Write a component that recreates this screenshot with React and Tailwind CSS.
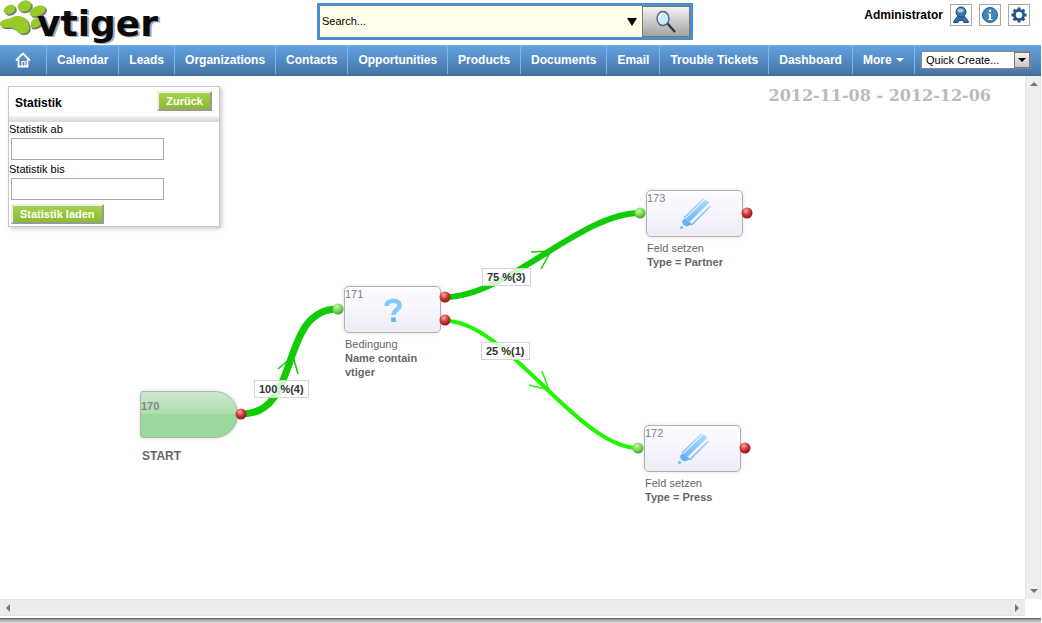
import React from "react";

const modules = [
  "Calendar", "Leads", "Organizations", "Contacts", "Opportunities", "Products",
  "Documents", "Email", "Trouble Tickets", "Dashboard",
];

function Paw() {
  return (
    <>
      <ellipse cx="9.500" cy="9.500" rx="6" ry="4.500" transform="rotate(-25 9.500 9.500)" />
      <ellipse cx="24.500" cy="6" rx="7" ry="5.500" transform="rotate(-25 24.500 6)" />
      <ellipse cx="37.500" cy="11" rx="8.500" ry="4.800" transform="rotate(-22 37.500 11)" />
      <path d="M0 24C0 19 7 20 12 17.500C18 14 26 17 27.500 21C28 24 30 26 29 29C28 34 21 35 18 32C15 29 12 27 8 27.500C4 28 0 27 0 24Z" />
      <path d="M31 24C31 19 37 17 42 18C46 19 46 22 43 24C39 25 37 28 33 28C30 28 30 27 31 24Z" />
    </>
  );
}

function Logo() {
  return (
    <svg viewBox="0 0 164 45" className="h-[45px] w-[164px]" role="img" aria-label="vtiger">
      <g fill="#777" transform="translate(1.500 1.500)"><Paw /></g>
      <g fill="#97cb2c"><Paw /></g>
      <g fontSize="36" fontWeight="700" fontFamily="DejaVu Sans, sans-serif">
        <text x="39" y="37" fill="#aaa">vtiger</text>
        <text x="37" y="36" fill="#0a0a0a">vtiger</text>
      </g>
    </svg>
  );
}

function IconButton({ label, children }) {
  return (
    <button type="button" aria-label={label} className="flex size-[22px] items-center justify-center border border-[#a9a9a9] bg-white">
      <svg viewBox="0 0 20 20" className="size-5">{children}</svg>
    </button>
  );
}

function Header() {
  return (
    <header className="grid h-[45px] grid-cols-[317px_minmax(0,376px)_1fr] items-start">
      <Logo />
      <form className="mt-[3px] flex h-[37px] border-[3px] border-[#4b8ccb] bg-[#ffffec]" onSubmit={(e) => e.preventDefault()}>
        <input aria-label="Search" defaultValue="Search..." className="min-w-0 flex-1 bg-transparent px-0.5 text-[11px] text-black outline-none" />
        <button type="button" aria-label="Search options" className="flex w-5 items-center justify-center">
          <svg viewBox="0 0 10 8" className="h-2 w-2.5"><path d="M0 0H10L5 8Z" /></svg>
        </button>
        <button type="submit" aria-label="Start search" className="flex w-[48px] items-center justify-center border border-[#777] bg-linear-to-b from-[#f4f4f4] to-[#a3a3a3]">
          <svg viewBox="0 0 22 24" className="h-6 w-[22px]">
            <path d="M12 13L20 22" stroke="#333" strokeWidth="2.200" />
            <ellipse cx="8" cy="8.500" rx="6" ry="7" fill="#c9ecfa" stroke="#4d6677" strokeWidth="1.400" />
            <path d="M4.500 8Q5 4 8 3.500" stroke="#fff" strokeWidth="1.500" fill="none" />
          </svg>
        </button>
      </form>
      <div className="flex items-center gap-[7px] pt-1 pr-[11px] justify-self-end">
        <span className="text-[12px] font-bold text-black">Administrator</span>
        <IconButton label="User">
          <path d="M2.500 17.500C3 14 6 13 7.500 10H12.500C14 13 17 14 17.500 17.500H13L12 15.500H8L7 17.500Z" fill="#3470a3" stroke="#1d4c7c" />
          <circle cx="10" cy="7" r="5" fill="#3b78aa" stroke="#1d4c7c" />
          <ellipse cx="9.500" cy="5.500" rx="3" ry="2" fill="#a5c8e0" />
        </IconButton>
        <IconButton label="Info">
          <circle cx="10" cy="10" r="7.500" fill="#4288b8" stroke="#245f91" />
          <path d="M8 8.500H11V14H12.500V15H8V14H9V9.500H8ZM9 4.800H11.200V7H9Z" fill="#fff" />
        </IconButton>
        <IconButton label="Settings">
          <g fill="#1c568c">
            <path d="M8.500 2.500h3v15h-3zM2.500 8.500h15v3h-15z" />
            <path d="M8.500 2.500h3v15h-3zM2.500 8.500h15v3h-15z" transform="rotate(45 10 10)" />
            <circle cx="10" cy="10" r="6" />
          </g>
          <circle cx="10" cy="10" r="3.300" fill="#fff" />
        </IconButton>
      </div>
    </header>
  );
}

function Nav() {
  const item = "flex items-center border-r border-[#7fb6e8] px-[10px] text-[12px] font-bold text-white";
  return (
    <nav className="flex h-[31px] border-t border-b-2 border-t-[#79b2ea] border-b-[#416c99] bg-linear-to-b from-[#62a1e1] to-[#4776a8] pr-[10px]">
      <a href="#home" aria-label="Home" className="flex w-[47px] items-center justify-center border-r border-[#7fb6e8]">
        <svg viewBox="0 0 16 16" className="size-4">
          <path d="M1 8.500L8 1.500L15 8.500M3.500 7.500V14.500H12.500V7.500" fill="none" stroke="#fff" strokeWidth="1.800" />
          <path d="M7 14V9.500H10V14" fill="none" stroke="#fff" strokeWidth="1.200" />
        </svg>
      </a>
      {modules.map((m) => <a key={m} href={"#" + m} className={item}>{m}</a>)}
      <button type="button" className={item + " gap-1"}>
        More
        <svg viewBox="0 0 8 4" className="h-1 w-2"><path d="M0 0H8L4 4Z" fill="#fff" /></svg>
      </button>
      <div className="relative ml-auto flex items-center">
        <select aria-label="Quick Create" className="h-[18px] w-[110px] appearance-none border border-[#888] bg-white pl-1 text-[11px] text-black">
          <option>Quick Create...</option>
        </select>
        <span className="pointer-events-none absolute right-px flex h-4 w-4 items-center justify-center border border-[#777] bg-linear-to-b from-[#f2f2f2] to-[#c9c9c9]">
          <svg viewBox="0 0 8 4" className="h-1 w-2"><path d="M0 0H8L4 4Z" /></svg>
        </span>
      </div>
    </nav>
  );
}

const greenButton = "h-5 border-2 border-t-[#eee] border-l-[#eee] border-r-[#999] border-b-[#999] bg-linear-to-b from-[#a6d246] to-[#8cbb30] px-[7px] text-[11px] leading-4 font-bold text-white";

function StatsPanel() {
  return (
    <section className="absolute top-[10px] left-2 w-[212px] border border-[#c8c8c8] bg-white pb-[2px] text-[11px] text-black shadow-[2px_2px_4px_#ccc]">
      <div className="flex h-[28px] items-center justify-between pr-[7px] pl-[6px]">
        <h2 className="pt-1 text-[12px] font-bold">Statistik</h2>
        <button type="button" className={greenButton}>Zurück</button>
      </div>
      <div className="mt-px h-[6px] bg-linear-to-b from-[#f3f4f0] to-[#d5d7d1]" />
      <form onSubmit={(e) => e.preventDefault()}>
        <label htmlFor="from" className="block h-4 leading-[14px]">Statistik ab</label>
        <input id="from" className="ml-[2px] block h-[22px] w-[153px] border border-[#aaa] px-1" />
        <label htmlFor="to" className="mt-[2px] block h-4 leading-[14px]">Statistik bis</label>
        <input id="to" className="ml-[2px] block h-[22px] w-[153px] border border-[#aaa] px-1" />
        <button type="button" className={greenButton + " mt-1 ml-[2px] block"}>Statistik laden</button>
      </form>
    </section>
  );
}

function Pencil() {
  return (
    <svg viewBox="0 0 32 32" className="size-8">
      <defs>
        <linearGradient id="pencil" gradientUnits="userSpaceOnUse" x1="0" y1="2" x2="0" y2="28">
          <stop offset="0" stopColor="#a4dcff" /><stop offset="1" stopColor="#68b0fc" />
        </linearGradient>
      </defs>
      <g fill="none" stroke="url(#pencil)">
        <path d="M5 20L24.500 1" strokeWidth="1.500" />
        <path d="M8.500 22.500L28.500 3" strokeWidth="5" />
        <path d="M12.500 27L31.500 8" strokeWidth="1.500" />
      </g>
      <path d="M4 21.500L7 20.500L9.500 24L12 24.500L12.500 26.500L8 28.500L4.500 27L3 24ZM2 27.500L5 30L1 31Z" fill="#68b0fc" />
    </svg>
  );
}

function Question() {
  return (
    <svg viewBox="0 0 20 24" className="h-6 w-5">
      <path d="M3.500 8C3.500 1.200 16.500 1 16.500 7.500C16.500 12 10.500 11.500 10.500 17" fill="none" stroke="#86c9ff" strokeWidth="4.500" />
      <path d="M8.200 19.500H12.800V24H8.200Z" fill="#68b0fc" />
    </svg>
  );
}

const nodes = [
  { id: 171, place: "left-[344px] top-[210px]", kind: "Bedingung", text: "Name contain vtiger", Icon: Question },
  { id: 173, place: "left-[646px] top-[114px]", kind: "Feld setzen", text: "Type = Partner", Icon: Pencil },
  { id: 172, place: "left-[644px] top-[349px]", kind: "Feld setzen", text: "Type = Press", Icon: Pencil },
];

const edgeLabels = [
  { place: "left-[254px] top-[304px]", text: "100 %(4)" },
  { place: "left-[482px] top-[192px]", text: "75 %(3)" },
  { place: "left-[481px] top-[266px]", text: "25 %(1)" },
];

const inputs = [[338, 233], [640, 137], [638, 372]];
const outputs = [[241, 338], [445, 221], [445, 244], [747, 137], [745, 372]];

function Edges() {
  return (
    <svg className="absolute top-0 left-0 h-[440px] w-[800px]" viewBox="0 0 800 440" fill="none">
      <g stroke="#10cb06">
        <path d="M242 338C302 338 278 233 338 233" strokeWidth="7" />
        <path d="M278 293L293 280L298 298" strokeWidth="1.500" />
        <path d="M446 221C506 221 580 137 640 137" strokeWidth="6" />
        <path d="M531 176L551 175L541 193" strokeWidth="1.500" />
      </g>
      <g stroke="#22f500">
        <path d="M446 245C506 245 578 372 638 372" strokeWidth="4" />
        <path d="M529 309L549 314L542 295" strokeWidth="1.500" />
      </g>
    </svg>
  );
}

function Endpoints() {
  return (
    <svg className="pointer-events-none absolute top-0 left-0 h-[440px] w-[800px]" viewBox="0 0 800 440">
      <defs>
        <radialGradient id="in" cx="0.4" cy="0.3" r="0.7">
          <stop offset="0" stopColor="#c9f5ae" /><stop offset="0.6" stopColor="#7ad552" /><stop offset="1" stopColor="#4a9a2c" />
        </radialGradient>
        <radialGradient id="out" cx="0.4" cy="0.3" r="0.7">
          <stop offset="0" stopColor="#f3b0b0" /><stop offset="0.5" stopColor="#d33a3a" /><stop offset="1" stopColor="#8f1515" />
        </radialGradient>
      </defs>
      {inputs.map(([x, y]) => <circle key={x} cx={x} cy={y} r="5.500" fill="url(#in)" />)}
      {outputs.map(([x, y]) => <circle key={x + "," + y} cx={x} cy={y} r="5.500" fill="url(#out)" />)}
    </svg>
  );
}

function Canvas() {
  return (
    <main className="relative min-w-0 flex-1 overflow-hidden bg-white text-[11px] leading-[14px] text-[#666]">
      <Edges />
      <StatsPanel />
      <p className="absolute top-2 right-[34px] font-['DejaVu_Serif',serif] text-[16px] leading-6 font-bold whitespace-nowrap text-[#bbb]">2012-11-08 - 2012-12-06</p>
      <div className="absolute top-[315px] left-[140px] w-[98px] font-bold">
        <div className="h-[47px] rounded-l-[3px] rounded-r-[23px] border border-[#aab5aa] bg-[linear-gradient(#cde8cd,#b0dcb0_48%,#9ad89c_49%)] pt-[7px] text-[#7d8d7d] shadow-[0_0_4px_#ddd]">170</div>
        <p className="mt-[11px] pl-[2px] text-[12px]">START</p>
      </div>
      {nodes.map(({ id, place, kind, text, Icon }) => (
        <div key={id} className={"absolute w-[97px] " + place}>
          <div className="relative flex h-[47px] items-center justify-center rounded-[5px] border border-[#b0b0b0] bg-linear-to-b from-[#fdfdff] to-[#ececf8] shadow-[0_0_4px_#ddd]">
            <span className="absolute top-0 left-0 text-[#808080]">{id}</span>
            <Icon />
          </div>
          <p className="mt-1 pl-px">{kind}</p>
          <p className="pl-px font-bold">{text}</p>
        </div>
      ))}
      {edgeLabels.map(({ place, text }) => (
        <div key={text} className={"absolute border border-[#d4d4d4] bg-white/80 px-1 leading-4 font-bold whitespace-nowrap text-[#333] " + place}>{text}</div>
      ))}
      <Endpoints />
    </main>
  );
}

function ScrollButton({ label, path }) {
  return (
    <button type="button" aria-label={label} className="flex size-4 items-center justify-center">
      <svg viewBox="0 0 8 8" className="size-2"><path d={path} fill="#777" /></svg>
    </button>
  );
}

export default function App() {
  return (
    <div className="flex min-h-screen flex-col bg-white pr-px font-['Liberation_Sans',Arial,sans-serif]">
      <Header />
      <Nav />
      <div className="flex flex-1">
        <Canvas />
        <div className="flex w-4 flex-col justify-between border-x border-[#e4e4e4] bg-[#eeeeee]">
          <ScrollButton label="Scroll up" path="M0 6H8L4 2Z" />
          <ScrollButton label="Scroll down" path="M0 2H8L4 6Z" />
        </div>
      </div>
      <div className="mr-4 flex h-[17px] justify-between border-y border-[#e4e4e4] bg-[#ececec]">
        <ScrollButton label="Scroll left" path="M6 0V8L2 4Z" />
        <ScrollButton label="Scroll right" path="M2 0V8L6 4Z" />
      </div>
      <div className="mt-[2px] h-[5px] border-t border-[#666] bg-linear-to-b from-[#999] to-[#ddd]" />
    </div>
  );
}
